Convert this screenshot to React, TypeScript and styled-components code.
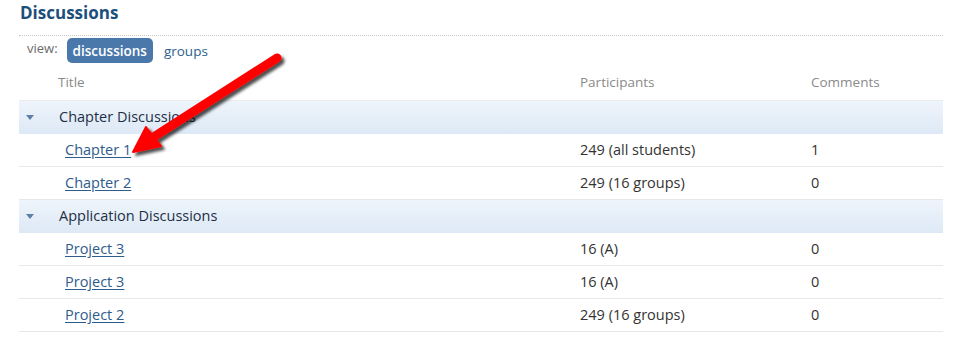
import React from "react";
import styled, { createGlobalStyle } from "styled-components";

const Global = createGlobalStyle`
  html, body { margin: 0; padding: 0; background: #fff; }
  body { font-family: "Open Sans", "DejaVu Sans", sans-serif; font-size: 13px; color: #333; }
`;

const Page = styled.div`
  position: relative;
  width: 961px;
  height: 338px;
  padding: 0 18px 0 19px;
  box-sizing: border-box;
  overflow: hidden;
`;

const Heading = styled.h1`
  margin: 0;
  padding: 2px 0 0 1px;
  height: 33px;
  font-size: 17px;
  font-weight: 700;
  color: #1c4f7c;
  line-height: 22px;
  border-bottom: 1px dotted #c8c8c8;
`;

const ViewBar = styled.div`
  display: flex;
  align-items: center;
  gap: 5px;
  height: 29px;
  padding: 0 0 0 8px;
  box-sizing: border-box;
`;

const ViewLabel = styled.span`
  color: #6a6a6a;
  font-size: 13px;
  margin-right: 4px;
  margin-top: -5px;
`;

const ViewTab = styled.span<{ $active?: boolean }>`
  display: inline-flex;
  align-items: center;
  height: 25px;
  padding: 0 6px;
  border-radius: 5px;
  font-size: 13.5px;
  background: ${(p) => (p.$active ? "#4a78aa" : "transparent")};
  color: ${(p) => (p.$active ? "#fff" : "#2d5e8e")};
  font-weight: ${(p) => (p.$active ? 600 : 400)};
`;

const Table = styled.div`
  display: flex;
  flex-direction: column;
`;

const Cols = `
  display: grid;
  grid-template-columns: 561px 231px 1fr;
  align-items: center;
`;

const HeadRow = styled.div`
  ${Cols}
  height: 36px;
  border-bottom: 1px solid #ececec;
  box-sizing: border-box;
  color: #8a8a8a;
  font-size: 13.5px;
  padding-bottom: 2px;
`;

const HeadTitle = styled.span`
  padding-left: 39px;
`;

const GroupRow = styled.div`
  display: flex;
  align-items: center;
  height: 33px;
  background: linear-gradient(#eef4fb, #dde9f6);
  color: #1e2f45;
  font-size: 14.5px;
  padding-bottom: 2px;
  box-sizing: border-box;
`;

const Caret = styled.span`
  width: 0;
  height: 0;
  border-left: 4px solid transparent;
  border-right: 4px solid transparent;
  border-top: 5px solid #5e7fa6;
  margin: 2px 25px 0 7px;
`;

const DataRow = styled.div`
  ${Cols}
  height: 33px;
  border-bottom: 1px solid #e8e8e8;
  box-sizing: border-box;
  font-size: 14.5px;
  color: #333;
  padding-bottom: 1px;
`;

const TitleCell = styled.span`
  padding-left: 46px;
`;

const Link = styled.a`
  color: #2e5c8c;
  text-decoration: underline;
  text-underline-offset: 2px;
`;

const ArrowLayer = styled.svg`
  position: absolute;
  left: 0;
  top: 0;
  pointer-events: none;
`;

type Row = { title: string; participants: string; comments: string };
type Group = { name: string; rows: Row[] };

const groups: Group[] = [
  {
    name: "Chapter Discussions",
    rows: [
      { title: "Chapter 1", participants: "249 (all students)", comments: "1" },
      { title: "Chapter 2", participants: "249 (16 groups)", comments: "0" },
    ],
  },
  {
    name: "Application Discussions",
    rows: [
      { title: "Project 3", participants: "16 (A)", comments: "0" },
      { title: "Project 3", participants: "16 (A)", comments: "0" },
      { title: "Project 2", participants: "249 (16 groups)", comments: "0" },
    ],
  },
];

export default function App() {
  return (
    <Page>
      <Global />
      <Heading>Discussions</Heading>
      <ViewBar>
        <ViewLabel>view:</ViewLabel>
        <ViewTab $active>discussions</ViewTab>
        <ViewTab>groups</ViewTab>
      </ViewBar>
      <Table>
        <HeadRow>
          <HeadTitle>Title</HeadTitle>
          <span>Participants</span>
          <span>Comments</span>
        </HeadRow>
        {groups.map((g) => (
          <React.Fragment key={g.name}>
            <GroupRow>
              <Caret />
              {g.name}
            </GroupRow>
            {g.rows.map((r, i) => (
              <DataRow key={i}>
                <TitleCell>
                  <Link href="#">{r.title}</Link>
                </TitleCell>
                <span>{r.participants}</span>
                <span>{r.comments}</span>
              </DataRow>
            ))}
          </React.Fragment>
        ))}
      </Table>
      <ArrowLayer width="961" height="338" viewBox="0 0 961 338">
        <defs>
          <filter id="sh" x="-20%" y="-20%" width="140%" height="140%">
            <feGaussianBlur in="SourceAlpha" stdDeviation="1.5" />
            <feOffset dx="3" dy="3" result="b" />
            <feComponentTransfer>
              <feFuncA type="linear" slope="0.7" />
            </feComponentTransfer>
            <feMerge>
              <feMergeNode />
              <feMergeNode in="SourceGraphic" />
            </feMerge>
          </filter>
        </defs>
        <g filter="url(#sh)">
          <line x1="277" y1="58" x2="152" y2="138" stroke="#f00" strokeWidth="9" strokeLinecap="round" />
          <path d="M133 152 L146 127 L161 146 Z" fill="#f00" stroke="#f00" strokeWidth="2" strokeLinejoin="round" />
        </g>
      </ArrowLayer>
    </Page>
  );
}
